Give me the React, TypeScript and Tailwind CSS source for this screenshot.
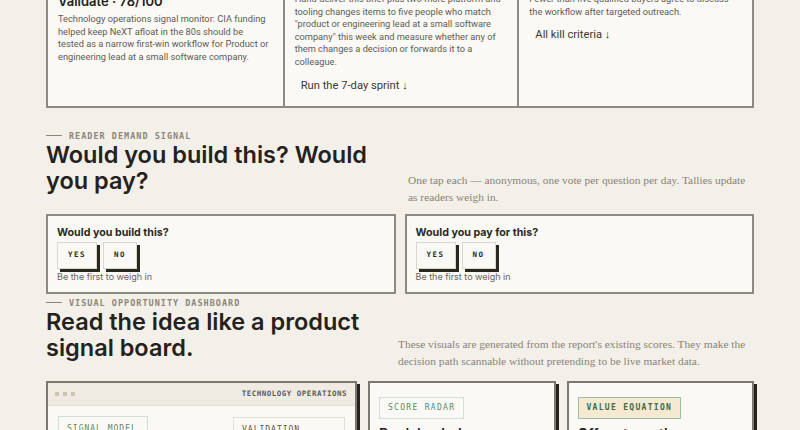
import React from "react";

const SANS = "font-['Inter',sans-serif]";
const BODY = "font-['Roboto',sans-serif]";
const SERIF = "font-['Liberation_Serif',serif]";
const MONO = "font-['DejaVu_Sans_Mono',monospace]";

function Eyebrow({ children }: { children: React.ReactNode }) {
  return (
    <div className="flex h-[12px] items-center gap-[7px]">
      <span className="block h-px w-[16px] bg-[#8b867a]" />
      <span className={`${MONO} text-[8.5px] font-semibold leading-[12px] tracking-[1px] text-[#8b867a]`}>{children}</span>
    </div>
  );
}

function VoteCard({ title }: { title: string }) {
  return (
    <div className="border-2 border-[#8e8a82] bg-[#faf9f5] px-[9px] pb-[10px] pt-[10px]">
      <div className={`${SANS} text-[10.7px] font-bold leading-[14px] text-[#2c2924]`}>{title}</div>
      <div className="mt-[2px] flex gap-[6px]">
        <button
          className={`${MONO} flex h-[27px] w-[40px] items-center justify-center border border-[#dcd7cc] bg-[#faf9f5] text-[7.5px] font-bold tracking-[1.5px] text-[#2c2924] shadow-[3px_3px_0_#2a2620]`}
        >
          YES
        </button>
        <button
          className={`${MONO} flex h-[27px] w-[34px] items-center justify-center border border-[#dcd7cc] bg-[#faf9f5] text-[7.5px] font-bold tracking-[1.5px] text-[#2c2924] shadow-[3px_3px_0_#2a2620]`}
        >
          NO
        </button>
      </div>
      <div className={`${SANS} mt-[3px] text-[9px] leading-[10px] text-[#68645c]`}>Be the first to weigh in</div>
    </div>
  );
}

export default function App() {
  return (
    <div className="min-h-[430px] overflow-hidden bg-[#f3f0e9]">
      <div className="px-[46px]">
        {/* Top verdict row */}
        <div className="-mt-[43px] grid grid-cols-3 border-2 border-[#8e8a82] bg-[#faf9f5]">
          <div className="pb-[10px] pl-[10px] pr-[13px] pt-[10px]">
            <div className={`${MONO} mb-[6px] text-[8px] leading-[18px] tracking-[1px] text-[#8b867a]`}>VERDICT</div>
            <div className={`${SANS} text-[13px] font-semibold leading-[16px] text-[#25221d]`}>Validate · 78/100</div>
            <p className={`${BODY} mt-[4px] text-[9.25px] leading-[12.6px] text-[#5f5b54]`}>
              Technology operations signal monitor: CIA funding helped keep NeXT afloat in the 80s should be tested as a
              narrow first-win workflow for Product or engineering lead at a small software company.
            </p>
          </div>
          <div className="border-l-2 border-[#8e8a82] px-[10px] pb-[10px] pt-[10px]">
            <div className={`${MONO} mb-[6px] text-[8px] leading-[18px] tracking-[1px] text-[#8b867a]`}>FIRST MOVE</div>
            <p className={`${BODY} text-[9.25px] leading-[12.6px] text-[#5f5b54]`}>
              Hand-deliver this brief plus two more platform and tooling changes items to five people who match
              "product or engineering lead at a small software company" this week and measure whether any of them
              changes a decision or forwards it to a colleague.
            </p>
            <div className={`${BODY} mt-[7px] px-[6px] py-[3px] text-[11.2px] leading-[14px] text-[#3b3832]`}>
              Run the 7-day sprint ↓
            </div>
          </div>
          <div className="border-l-2 border-[#8e8a82] px-[10px] pb-[10px] pt-[10px]">
            <div className={`${MONO} mb-[6px] text-[8px] leading-[18px] tracking-[1px] text-[#8b867a]`}>KILL IF</div>
            <p className={`${BODY} text-[9.25px] leading-[12.6px] text-[#5f5b54]`}>
              Fewer than five qualified buyers agree to discuss the workflow after targeted outreach.
            </p>
            <div className={`${BODY} mt-[7px] px-[6px] py-[3px] text-[11.2px] leading-[14px] text-[#3b3832]`}>
              All kill criteria ↓
            </div>
          </div>
        </div>

        {/* Reader demand header */}
        <div className="mt-[22px] grid grid-cols-[1fr_346px] items-end">
          <div className="pb-[10px]">
            <Eyebrow>READER DEMAND SIGNAL</Eyebrow>
            <h2 className={`${SANS} max-w-[345px] text-[23.5px] font-semibold leading-[26px] text-[#25221d]`}>
              Would you build this? Would you pay?
            </h2>
          </div>
          <p className={`${SERIF} -mb-[2px] text-[11.4px] leading-[17px] text-[#888378]`}>
            One tap each — anonymous, one vote per question per day. Tallies update as readers weigh in.
          </p>
        </div>

        {/* Vote cards */}
        <div className="mt-[10px] grid grid-cols-2 gap-[9px]">
          <VoteCard title="Would you build this?" />
          <VoteCard title="Would you pay for this?" />
        </div>

        {/* Dashboard header */}
        <div className="mt-[3px] grid grid-cols-[1fr_356px] items-end">
          <div className="pb-[9px]">
            <Eyebrow>VISUAL OPPORTUNITY DASHBOARD</Eyebrow>
            <h2 className={`${SANS} max-w-[345px] text-[23.5px] font-semibold leading-[26px] text-[#25221d]`}>
              Read the idea like a product signal board.
            </h2>
          </div>
          <p className={`${SERIF} text-[11.4px] leading-[17px] text-[#888378]`}>
            These visuals are generated from the report's existing scores. They make the decision path scannable
            without pretending to be live market data.
          </p>
        </div>

        {/* Dashboard cards */}
        <div className="mt-[11px] grid grid-cols-[311px_1fr_1fr] gap-x-[11px]">
          <div className="border-2 border-[#7c786f] bg-[#faf9f5] shadow-[3px_3px_0_#26231e]">
            <div className="flex h-[23px] items-center justify-between border-b border-[#e4dfd3] bg-[#efebe2] pl-[7px] pr-[8px]">
              <div className="flex gap-[4px]">
                <span className="block h-[4px] w-[4px] bg-[#cdc5b0]" />
                <span className="block h-[4px] w-[4px] bg-[#cdc5b0]" />
                <span className="block h-[4px] w-[4px] bg-[#cdc5b0]" />
              </div>
              <span className={`${MONO} text-[7.5px] font-semibold tracking-[0.5px] text-[#5f5b53]`}>TECHNOLOGY OPERATIONS</span>
            </div>
            <div className="flex justify-between p-[10px]">
              <div className="w-[90px] border border-[#cfe0d3] px-[8px] pb-[8px] pt-[6px]">
                <div className={`${MONO} text-[8px] leading-[12px] tracking-[1px] text-[#5d8a66]`}>SIGNAL MODEL</div>
                <div className={`${SANS} mt-[4px] text-[18px] font-semibold text-[#25221d]`}>78</div>
              </div>
              <div className="mt-px w-[112px] border border-[#e3dfd3] px-[8px] pb-[8px] pt-[6px]">
                <div className={`${MONO} text-[8px] leading-[12px] tracking-[1px] text-[#5a564f]`}>VALIDATION</div>
                <div className="mt-[6px] h-[4px] bg-[#e9e5da]" />
              </div>
            </div>
          </div>

          <div className="border-2 border-[#7c786f] bg-[#faf9f5] p-[9px] shadow-[3px_3px_0_#26231e]">
            <span
              className={`${MONO} inline-flex h-[22px] items-center border border-[#d5dfcf] px-[8px] text-[8px] tracking-[1.3px] text-[#5b8a64]`}
            >
              SCORE RADAR
            </span>
            <div className={`${SANS} mt-[6px] text-[14px] font-semibold leading-[18px] text-[#25221d]`}>
              Decision balance
            </div>
          </div>

          <div className="border-2 border-[#7c786f] bg-[#faf9f5] p-[9px] shadow-[3px_3px_0_#26231e]">
            <span
              className={`${MONO} inline-flex h-[22px] items-center border border-[#9cbf9e] bg-[#f5e9d1] px-[8px] text-[8px] font-bold tracking-[1.3px] text-[#3e6a48]`}
            >
              VALUE EQUATION
            </span>
            <div className={`${SANS} mt-[6px] text-[14px] font-semibold leading-[18px] text-[#25221d]`}>
              Offer strength
            </div>
          </div>
        </div>
      </div>
    </div>
  );
}
